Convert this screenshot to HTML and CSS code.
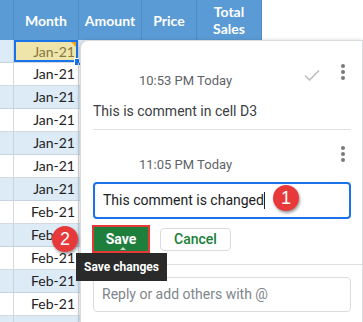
FILE: index.html
```html
<!DOCTYPE html>
<html lang="en">
<head>
    <meta charset="UTF-8">
    <meta name="viewport" content="width=device-width, initial-scale=1.0">
    <title>Comment edit</title>
    <link rel="stylesheet" href="styles.css">
</head>
<body>
    <div class="sheet">
        <div class="hd"></div>
        <div class="hd">Month</div>
        <div class="hd">Amount</div>
        <div class="hd">Price</div>
        <div class="hd">Total<br>Sales</div>
        <div class="hd blank"></div>

        <div class="c blue"></div><div class="c sel">Jan-21<span class="note"></span><span class="handle"></span></div><div class="c blue"></div><div class="c blue"></div><div class="c blue"></div><div class="c blue"></div>
        <div class="c"></div><div class="c">Jan-21</div><div class="c"></div><div class="c"></div><div class="c"></div><div class="c"></div>
        <div class="c blue"></div><div class="c blue">Jan-21</div><div class="c blue"></div><div class="c blue"></div><div class="c blue"></div><div class="c blue"></div>
        <div class="c"></div><div class="c">Jan-21</div><div class="c"></div><div class="c"></div><div class="c"></div><div class="c"></div>
        <div class="c blue"></div><div class="c blue">Jan-21</div><div class="c blue"></div><div class="c blue"></div><div class="c blue"></div><div class="c blue"></div>
        <div class="c"></div><div class="c">Jan-21</div><div class="c"></div><div class="c"></div><div class="c"></div><div class="c"></div>
        <div class="c blue"></div><div class="c blue">Jan-21</div><div class="c blue"></div><div class="c blue"></div><div class="c blue"></div><div class="c blue"></div>
        <div class="c"></div><div class="c">Feb-21</div><div class="c"></div><div class="c"></div><div class="c"></div><div class="c"></div>
        <div class="c blue"></div><div class="c blue">Feb-21</div><div class="c blue"></div><div class="c blue"></div><div class="c blue"></div><div class="c blue"></div>
        <div class="c"></div><div class="c">Feb-21</div><div class="c"></div><div class="c"></div><div class="c"></div><div class="c"></div>
        <div class="c blue"></div><div class="c blue">Feb-21</div><div class="c blue"></div><div class="c blue"></div><div class="c blue"></div><div class="c blue"></div>
        <div class="c"></div><div class="c">Feb-21</div><div class="c"></div><div class="c"></div><div class="c"></div><div class="c"></div>
        <div class="c blue"></div><div class="c blue"></div><div class="c blue"></div><div class="c blue"></div><div class="c blue"></div><div class="c blue"></div>
    </div>

    <div class="popup">
        <div class="c-head first">
            <div class="c-meta">10:53 PM Today</div>
            <svg class="c-check" width="16" height="12" viewBox="0 0 16 12">
                <path d="M1 6.5 L5.5 11 L15 1.5" fill="none" stroke="#bdbdbd" stroke-width="1.6"/>
            </svg>
            <svg class="c-more" width="16" height="18" viewBox="0 0 16 18">
                <circle cx="8" cy="3" r="2" fill="#7a7a7a"/>
                <circle cx="8" cy="9" r="2" fill="#7a7a7a"/>
                <circle cx="8" cy="15" r="2" fill="#7a7a7a"/>
            </svg>
        </div>
        <div class="c-text">This is comment in cell D3</div>
        <div class="line"></div>

        <div class="c-head second">
            <div class="c-meta">11:05 PM Today</div>
            <svg class="c-more" width="16" height="18" viewBox="0 0 16 18">
                <circle cx="8" cy="3" r="2" fill="#7a7a7a"/>
                <circle cx="8" cy="9" r="2" fill="#7a7a7a"/>
                <circle cx="8" cy="15" r="2" fill="#7a7a7a"/>
            </svg>
        </div>
        <div class="edit">This comment is changed<span class="caret"></span></div>

        <div class="actions">
            <div class="save-mark"><div class="save">Save<span class="tip-arrow"></span></div></div>
            <div class="cancel">Cancel</div>
        </div>
        <div class="line wide"></div>
        <div class="reply">Reply or add others with @</div>
    </div>

    <div class="tooltip">Save changes</div>
    <div class="badge one">1</div>
    <div class="badge two">2</div>
</body>
</html>
```

FILE: styles.css
```css
body {
    margin: 0;
    width: 363px;
    height: 322px;
    overflow: hidden;
    position: relative;
    background: #fff;
    font-family: Roboto, "Liberation Sans", sans-serif;
}
.sheet {
    display: grid;
    grid-template-columns: 14px 65px 63px 55px 65px 101px;
    grid-template-rows: 40px;
    grid-auto-rows: 23px;
    height: 322px;
    overflow: hidden;
    font-family: Lato, "Liberation Sans", sans-serif;
}
.hd {
    background: #5b9bd5;
    color: #fff;
    font-weight: bold;
    font-size: 14px;
    line-height: 17px;
    display: flex;
    align-items: center;
    justify-content: center;
    text-align: center;
    border-right: 1px solid #4f8cc4;
    box-sizing: border-box;
}
.hd.blank {
    background: #fff;
    border: none;
}
.c {
    box-sizing: border-box;
    border-right: 1px solid #d4d9de;
    border-bottom: 1px solid #d4d9de;
    font-size: 14px;
    color: #222;
    text-align: right;
    padding-right: 3px;
    line-height: 22px;
    position: relative;
}
.c.blue {
    background: #ddebf7;
    border-color: #c6d4e2;
}
.c.sel {
    background: #efe5ab;
    color: #85773f;
    box-shadow: inset 0 0 0 2px #1a73e8;
    line-height: 23px;
}
.note {
    position: absolute;
    right: 2px;
    top: 2px;
    border-top: 5px solid #f4a21b;
    border-left: 5px solid transparent;
}
.handle {
    position: absolute;
    right: -4px;
    bottom: -4px;
    width: 6px;
    height: 6px;
    background: #1a73e8;
    border: 1px solid #fff;
}
.popup {
    position: absolute;
    left: 80px;
    top: 40px;
    width: 283px;
    height: 282px;
    overflow: hidden;
    box-sizing: border-box;
    background: #fff;
    border: 1px solid #dadce0;
    border-bottom: none;
    border-radius: 8px 0 0 0;
    box-shadow: 0 1px 4px rgba(0, 0, 0, 0.25);
    padding: 0 11px 0 12px;
}
.c-head {
    display: flex;
    align-items: flex-start;
}
.c-head.first {
    padding-top: 21px;
}
.c-head.second {
    padding-top: 14px;
}
.c-meta {
    flex: 1;
    padding-left: 46px;
    font-size: 13px;
    line-height: 16px;
    color: #5f6368;
}
.first .c-meta {
    padding-top: 11px;
}
.second .c-meta {
    padding-top: 13px;
}
.c-check {
    margin: 7px 15px 0 0;
}
.c-more {
    margin-top: 1px;
}
.c-text {
    margin-top: 12px;
    font-size: 14px;
    line-height: 20px;
    color: #3c4043;
}
.line {
    margin-top: 8px;
    height: 1px;
    background: #e0e0e0;
}
.line.wide {
    margin: 11px -11px 0 -12px;
}
.edit {
    margin-top: 9px;
    height: 37px;
    box-sizing: border-box;
    border: 2px solid #1a73e8;
    border-radius: 4px;
    padding-left: 8px;
    font-size: 14px;
    line-height: 33px;
    color: #202124;
}
.caret {
    display: inline-block;
    width: 1px;
    height: 17px;
    background: #202124;
    vertical-align: -4px;
}
.actions {
    display: flex;
    align-items: center;
    margin-top: 6px;
}
.save-mark {
    margin-left: -1px;
    border: 2px solid #e53935;
}
.save {
    position: relative;
    width: 54px;
    height: 24px;
    background: #1e7e3c;
    color: #fff;
    font-weight: bold;
    font-size: 14px;
    line-height: 24px;
    text-align: center;
}
.tip-arrow {
    position: absolute;
    left: 26px;
    bottom: 1px;
    border-bottom: 3px solid #c8d8c8;
    border-left: 3px solid transparent;
    border-right: 3px solid transparent;
}
.cancel {
    margin-left: 10px;
    width: 71px;
    height: 23px;
    box-sizing: border-box;
    border: 1px solid #dadce0;
    border-radius: 4px;
    color: #188038;
    font-weight: 500;
    font-size: 14px;
    line-height: 21px;
    text-align: center;
}
.reply {
    margin-top: 12px;
    height: 35px;
    box-sizing: border-box;
    border: 1px solid #dadce0;
    border-radius: 4px;
    padding-left: 8px;
    font-size: 14px;
    line-height: 33px;
    color: #80868b;
}
.tooltip {
    position: absolute;
    left: 76px;
    top: 253px;
    width: 91px;
    height: 28px;
    background: #2a2a2a;
    color: #fff;
    font-weight: bold;
    font-size: 12px;
    line-height: 28px;
    text-align: center;
}
.badge {
    position: absolute;
    width: 26px;
    height: 26px;
    border-radius: 50%;
    background: #e8393a;
    color: #fff;
    font-family: "Liberation Sans", sans-serif;
    font-size: 18px;
    line-height: 26px;
    text-align: center;
    box-shadow: 1px 2px 3px rgba(0, 0, 0, 0.4);
}
.badge.one {
    left: 273px;
    top: 185px;
}
.badge.two {
    left: 52px;
    top: 226px;
}
```
